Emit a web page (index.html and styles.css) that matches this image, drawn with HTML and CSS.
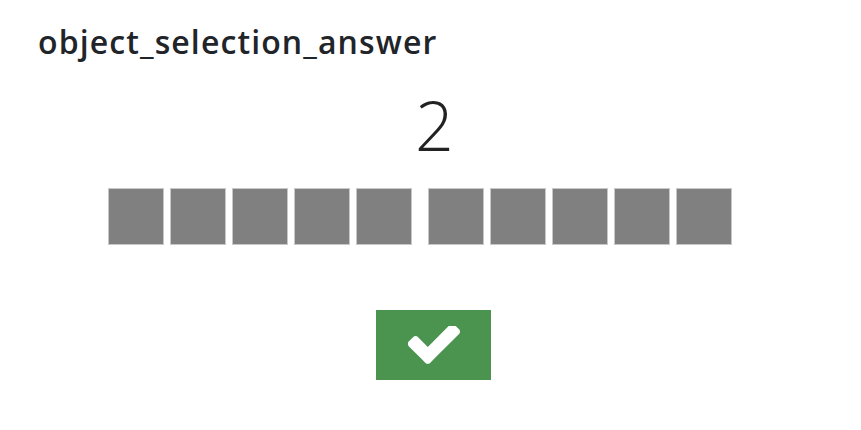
FILE: index.html
```html
<!DOCTYPE html>
<html>
<head>
<meta charset="utf-8">
<link rel="stylesheet" href="styles.css">
</head>
<body>
<div class="page">
  <h1 class="title">object_selection_answer</h1>
  <div class="count">2</div>
  <div class="squares">
    <div class="group">
      <div class="sq"></div><div class="sq"></div><div class="sq"></div><div class="sq"></div><div class="sq"></div>
    </div>
    <div class="group">
      <div class="sq"></div><div class="sq"></div><div class="sq"></div><div class="sq"></div><div class="sq"></div>
    </div>
  </div>
  <div class="actions">
    <button class="ok" type="button" aria-label="OK">
      <svg class="check" viewBox="128 402 1543 1120" width="52" height="38"><path fill="#fff" d="M1671 566q0 40-28 68l-724 724-136 136q-28 28-68 28t-68-28l-136-136-362-362q-28-28-28-68t28-68l136-136q28-28 68-28t68 28l294 295 656-657q28-28 68-28t68 28l136 136q28 28 28 68z"/></svg>
    </button>
  </div>
</div>
</body>
</html>
```

FILE: styles.css
```css
html, body {
  margin: 0;
  padding: 0;
  background: #fff;
}
.page {
  font-family: "Open Sans", "Noto Sans", sans-serif;
  color: #212529;
  padding: 22px 0 0 38px;
  width: 823px;
}
.title {
  margin: 0;
  font-size: 32px;
  font-weight: 600;
  line-height: 40px;
  letter-spacing: 1.1px;
}
.count {
  margin: 23px 0 0 -38px;
  text-align: center;
  font-size: 68px;
  font-weight: 300;
  line-height: 80px;
  color: #222;
  padding-left: 8px;
}
.squares {
  display: flex;
  gap: 16px;
  margin: 23px 0 0 70px;
}
.group {
  display: flex;
  gap: 6px;
}
.sq {
  width: 54px;
  height: 55px;
  background: #808080;
  border: 1px solid #c8c8c8;
}
.actions {
  display: flex;
  margin: 65px 0 0 338px;
}
.ok {
  width: 115px;
  height: 70px;
  border: none;
  padding: 0;
  background: #4a9450;
  display: flex;
  align-items: center;
  justify-content: center;
}
.check {
  display: block;
}
```
